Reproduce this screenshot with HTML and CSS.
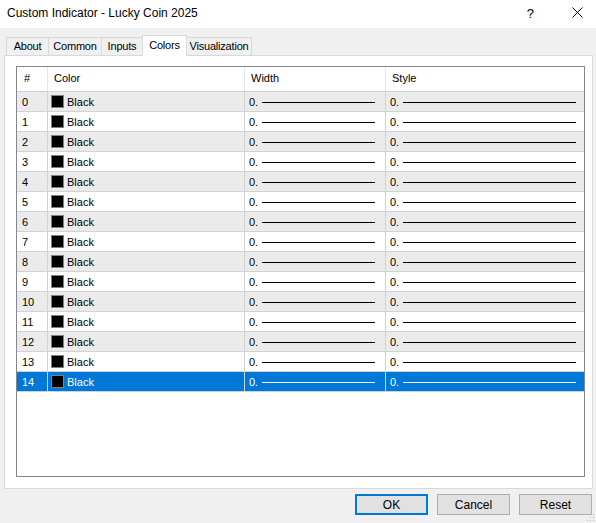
FILE: index.html
```html
<!DOCTYPE html>
<html>
<head>
<meta charset="utf-8">
<link rel="stylesheet" href="styles.css">
</head>
<body>
<div class="window">
  <div class="titlebar">
    <span class="title">Custom Indicator - Lucky Coin 2025</span>
    <span class="help">?</span>
    <svg class="close" width="11" height="11" viewBox="0 0 11 11"><path d="M0.5 0.5 L10.5 10.5 M10.5 0.5 L0.5 10.5" stroke="#000" stroke-width="1"/></svg>
  </div>
  <div class="tabs">
    <div class="tab t-about">About</div>
    <div class="tab t-common">Common</div>
    <div class="tab t-inputs">Inputs</div>
    <div class="tab t-colors active">Colors</div>
    <div class="tab t-vis">Visualization</div>
  </div>
  <div class="panel">
    <div class="lv">
      <div class="hdr">
        <div class="hc c-num">#</div>
        <div class="hc c-color">Color</div>
        <div class="hc c-width">Width</div>
        <div class="hc c-style">Style</div>
      </div>
      <div id="rows"></div>
    </div>
  </div>
  <div class="buttons">
    <button class="btn default">OK</button>
    <button class="btn">Cancel</button>
    <button class="btn">Reset</button>
  </div>
  <svg class="grip" width="8" height="8" viewBox="0 0 8 8">
    <rect x="6" y="0" width="1" height="1" fill="#b8b8b8"/>
    <rect x="3" y="3" width="1" height="1" fill="#b8b8b8"/>
    <rect x="6" y="3" width="1" height="1" fill="#b8b8b8"/>
    <rect x="0" y="6" width="1" height="1" fill="#b8b8b8"/>
    <rect x="3" y="6" width="1" height="1" fill="#b8b8b8"/>
    <rect x="6" y="6" width="1" height="1" fill="#b8b8b8"/>
  </svg>
</div>
<script src="script.js"></script>
</body>
</html>
```
FILE: script.js
```js
(function () {
  var host = document.getElementById('rows');
  var html = '';
  for (var i = 0; i < 15; i++) {
    var cls = 'row' + (i % 2 === 0 ? ' alt' : '') + (i === 14 ? ' sel' : '');
    html += '<div class="' + cls + '">' +
      '<div class="cell c-num">' + i + '</div>' +
      '<div class="cell c-color"><span class="swatch"></span><span>Black</span></div>' +
      '<div class="cell c-width"><span class="val">0.</span><span class="line lw"></span></div>' +
      '<div class="cell c-style"><span class="val">0.</span><span class="line ls"></span></div>' +
      '</div>';
  }
  host.innerHTML = html;
})();
```
FILE: styles.css
```css
* { box-sizing: border-box; }
html, body { margin: 0; padding: 0; }
body {
  background: #f0f0f0;
  font-family: "Liberation Sans", Arial, sans-serif;
  font-size: 11px;
  color: #000;
  width: 596px;
  height: 523px;
  overflow: hidden;
}
.window { position: relative; width: 596px; height: 523px; }

.titlebar {
  height: 28px;
  background: #fff;
  display: flex;
  align-items: center;
  padding-left: 7px;
}
.title { font-size: 12px; flex: 1; margin-top: -2px; }
.help { font-size: 13px; margin-right: 38px; margin-top: -2px; }
.close { margin-right: 13px; margin-top: -3px; }

.tabs {
  display: flex;
  align-items: flex-end;
  height: 27px;
  padding-left: 6px;
  padding-top: 7px;
}
.tab {
  height: 18px;
  border: 1px solid #d9d9d9;
  border-bottom: none;
  border-right: none;
  background: #f0f0f0;
  text-align: center;
  line-height: 17px;
  font-size: 11px;
  letter-spacing: -0.2px;
}
.t-about { width: 42px; }
.t-common { width: 53px; }
.t-inputs { width: 41px; }
.t-colors { width: 45px; }
.t-vis { width: 65px; border-right: 1px solid #d9d9d9; }
.tab.active {
  height: 21px;
  background: #fff;
  border-right: 1px solid #d9d9d9;
  margin-bottom: -1px;
  position: relative;
  line-height: 18px;
  z-index: 2;
}
.tab.active + .tab { border-left: none; }

.panel {
  margin-left: 4px;
  width: 589px;
  height: 434px;
  background: #fff;
  border: 1px solid #d9d9d9;
  padding: 10px 7px 10px 11px;
}
.lv {
  width: 569px;
  height: 411px;
  border: 1px solid #828790;
  background: #fff;
}
.hdr {
  display: grid;
  grid-template-columns: 31px 197px 141px 1fr;
  height: 24px;
}
.hc {
  border-right: 1px solid #e5e5e5;
  line-height: 23px;
  padding-left: 6px;
}
.hc.c-num { padding-left: 7px; }
.hc.c-style { border-right: none; }

.row {
  display: grid;
  grid-template-columns: 31px 197px 141px 1fr;
  height: 20px;
  border-top: 1px solid #d2d2d2;
  background: #fff;
}
.row.alt { background: #ebebeb; }
.row.sel { background: #0078d7; color: #fff; border-bottom: 1px solid #d2d2d2; height: 21px; }
.cell {
  border-right: 1px solid #d2d2d2;
  display: flex;
  align-items: center;
  height: 19px;
  white-space: nowrap;
}
.cell.c-num { padding-left: 5px; }
.cell.c-color { padding-left: 3px; }
.cell.c-width { padding-left: 4px; }
.cell.c-style { padding-left: 4px; border-right: none; }
.swatch {
  width: 13px;
  height: 13px;
  background: #000;
  border: 1px solid #808080;
  margin-right: 3px;
}
.val { width: 13px; }
.line {
  flex: 1;
  height: 1px;
  background: #000;
  margin-top: 1px;
}
.lw { margin-right: 10px; }
.ls { margin-right: 8px; }
.row.sel .line { background: #fff; }

.buttons {
  display: flex;
  justify-content: flex-end;
  gap: 9px;
  padding-right: 4px;
  margin-top: 5px;
}
.btn {
  width: 73px;
  height: 21px;
  background: #e1e1e1;
  border: 1px solid #adadad;
  font-family: "Liberation Sans", Arial, sans-serif;
  font-size: 12px;
  color: #000;
  padding: 0;
}
.btn.default { border: 2px solid #0078d7; }
.grip { position: absolute; right: 1px; bottom: 1px; }
```
